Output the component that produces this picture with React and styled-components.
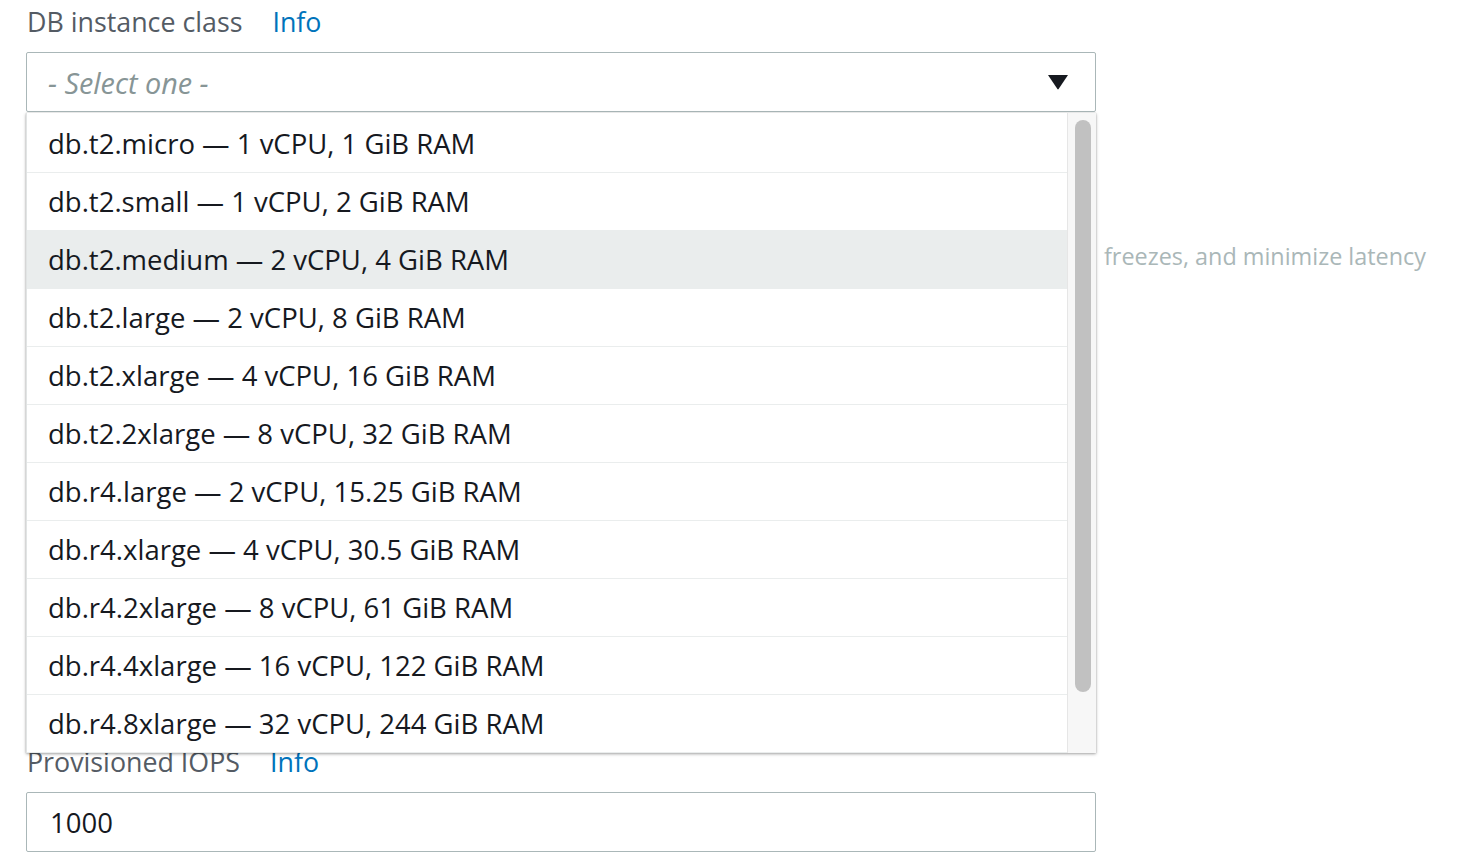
import React from "react";
import styled, { createGlobalStyle } from "styled-components";

const Global = createGlobalStyle`
  html, body { margin: 0; padding: 0; background: #ffffff; }
  body { font-family: "Open Sans", "Noto Sans", Arial, sans-serif; }
`;

const Page = styled.div`
  position: relative;
  width: 1464px;
  height: 868px;
  overflow: hidden;
  padding: 4px 38px 0 26px;
  box-sizing: border-box;
`;

const LabelRow = styled.div`
  display: flex;
  align-items: baseline;
  gap: 30px;
  height: 40px;
  padding-left: 1px;
  font-size: 26.8px;
  line-height: 36px;
`;

const LabelText = styled.span`
  color: #545b64;
`;

const InfoLink = styled.a`
  color: #0073bb;
  text-decoration: none;
`;

const Field = styled.div`
  position: relative;
  width: 1070px;
`;

const SelectBox = styled.div`
  margin-top: 8px;
  height: 60px;
  box-sizing: border-box;
  border: 1px solid #aab7b8;
  border-radius: 2px;
  display: flex;
  align-items: center;
  justify-content: space-between;
  padding: 0 26px 0 21px;
  font-size: 28.8px;
`;

const Placeholder = styled.span`
  color: #879596;
  font-style: italic;
`;

const Caret = styled.svg`
  width: 22px;
  height: 16px;
  display: block;
`;

const Dropdown = styled.div`
  position: absolute;
  top: 61px;
  left: 0;
  width: 1070px;
  height: 640px;
  background: #ffffff;
  box-shadow: 0 1px 3px rgba(0, 0, 0, 0.35), 0 0 1px rgba(0, 0, 0, 0.2);
  display: flex;
  z-index: 10;
`;

const List = styled.ul`
  list-style: none;
  margin: 0;
  padding: 0;
  flex: 1;
  overflow: hidden;
  border-left: 1px solid #e1e4e4;
`;

const Option = styled.li`
  height: 58px;
  box-sizing: border-box;
  border-bottom: 1px solid #eaeded;
  background: ${(p) => (p.$active ? "#eaeded" : "#ffffff")};
  display: flex;
  align-items: center;
  padding: 0 0 0 21px;
  font-size: 27.5px;
  color: #16191f;
  &:first-child { height: 60px; padding-top: 1px; }
`;

const Track = styled.div`
  width: 29px;
  background: #f7f7f7;
  border-left: 1px solid #e6e6e6;
  box-sizing: border-box;
  padding: 7px 6px 0 7px;
`;

const Thumb = styled.div`
  width: 16px;
  height: 572px;
  border-radius: 8px;
  background: #c1c1c1;
`;

const Under = styled.div`
  height: 632px;
  padding-top: 128px;
  box-sizing: border-box;
`;

const Description = styled.p`
  margin: 0;
  width: 1400px;
  text-align: right;
  white-space: nowrap;
  color: #aab7b8;
  font-size: 23.4px;
  line-height: 32px;
`;

const InputBox = styled.div`
  margin-top: 8px;
  width: 1070px;
  height: 60px;
  box-sizing: border-box;
  border: 1px solid #aab7b8;
  border-radius: 2px;
  display: flex;
  align-items: center;
  padding: 1px 0 0 23px;
  font-size: 27.5px;
  color: #16191f;
`;

const options = [
  "db.t2.micro — 1 vCPU, 1 GiB RAM",
  "db.t2.small — 1 vCPU, 2 GiB RAM",
  "db.t2.medium — 2 vCPU, 4 GiB RAM",
  "db.t2.large — 2 vCPU, 8 GiB RAM",
  "db.t2.xlarge — 4 vCPU, 16 GiB RAM",
  "db.t2.2xlarge — 8 vCPU, 32 GiB RAM",
  "db.r4.large — 2 vCPU, 15.25 GiB RAM",
  "db.r4.xlarge — 4 vCPU, 30.5 GiB RAM",
  "db.r4.2xlarge — 8 vCPU, 61 GiB RAM",
  "db.r4.4xlarge — 16 vCPU, 122 GiB RAM",
  "db.r4.8xlarge — 32 vCPU, 244 GiB RAM",
];

export default function App() {
  return (
    <>
      <Global />
      <Page>
        <LabelRow>
          <LabelText>DB instance class</LabelText>
          <InfoLink>Info</InfoLink>
        </LabelRow>
        <Field>
          <SelectBox>
            <Placeholder>- Select one -</Placeholder>
            <Caret viewBox="0 0 22 16">
              <path d="M1 1 H21 L11.6 15 Q11 15.8 10.4 15 Z" fill="#16191f" />
            </Caret>
          </SelectBox>
          <Dropdown>
            <List>
              {options.map((o, i) => (
                <Option key={o} $active={i === 2}>
                  {o}
                </Option>
              ))}
            </List>
            <Track>
              <Thumb />
            </Track>
          </Dropdown>
        </Field>
        <Under>
          <Description>freezes, and minimize latency</Description>
        </Under>
        <LabelRow>
          <LabelText>Provisioned IOPS</LabelText>
          <InfoLink>Info</InfoLink>
        </LabelRow>
        <InputBox>1000</InputBox>
      </Page>
    </>
  );
}
